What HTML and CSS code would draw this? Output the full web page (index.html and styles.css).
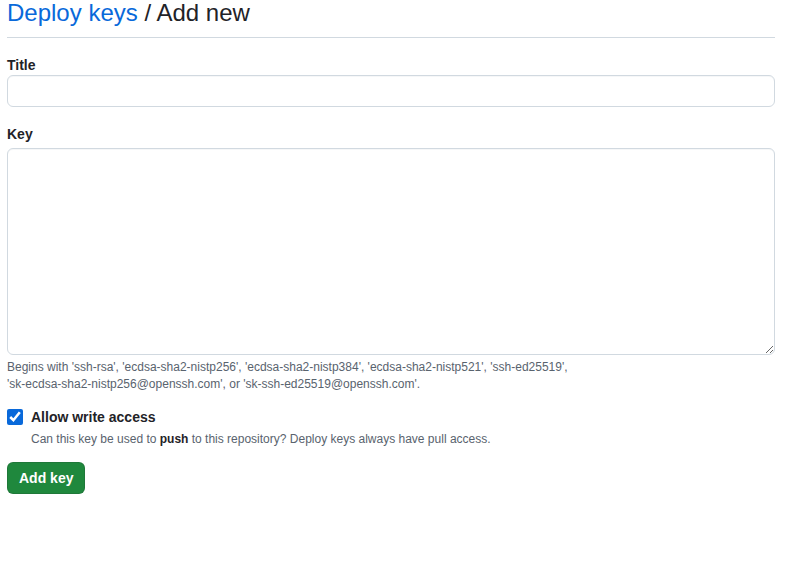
FILE: index.html
```html
<!DOCTYPE html>
<html lang="en">
<head>
    <meta charset="UTF-8">
    <title>Deploy keys / Add new</title>
    <link rel="stylesheet" href="styles.css">
</head>
<body>
    <div class="page">
        <div class="subhead">
            <h2 class="subhead-heading"><a href="#">Deploy keys</a> / Add new</h2>
        </div>

        <form class="key-form">
            <div class="form-group">
                <label class="form-label" for="title">Title</label>
                <input class="form-control" type="text" id="title">
            </div>

            <div class="form-group key-group">
                <label class="form-label" for="key">Key</label>
                <textarea class="form-control key-area" id="key"></textarea>
                <p class="note">Begins with 'ssh-rsa', 'ecdsa-sha2-nistp256', 'ecdsa-sha2-nistp384', 'ecdsa-sha2-nistp521', 'ssh-ed25519',<br>'sk-ecdsa-sha2-nistp256@openssh.com', or 'sk-ssh-ed25519@openssh.com'.</p>
            </div>

            <div class="form-checkbox">
                <input type="checkbox" id="write" checked>
                <div>
                    <label class="check-label" for="write">Allow write access</label>
                    <p class="note check-note">Can this key be used to <strong>push</strong> to this repository? Deploy keys always have pull access.</p>
                </div>
            </div>

            <button type="button" class="btn-primary">Add key</button>
        </form>
    </div>
</body>
</html>
```

FILE: styles.css
```css
body {
    margin: 0;
    font-family: "Liberation Sans", Arial, sans-serif;
    font-size: 14px;
    color: #1f2328;
    background: #fff;
}

.page {
    width: 768px;
    margin-left: 7px;
}

.subhead {
    padding-bottom: 11px;
    border-bottom: 1px solid #d1d9e0;
}

.subhead-heading {
    margin: 0;
    font-size: 24px;
    font-weight: 400;
    line-height: 26px;
}

.subhead-heading a {
    color: #0969da;
    text-decoration: none;
}

.key-form {
    padding-top: 17px;
}

.form-group {
    margin-bottom: 17px;
}

.form-label {
    display: block;
    font-weight: 600;
    line-height: 20px;
}

.key-group {
    margin-bottom: 15px;
}

.key-group .form-label {
    margin-bottom: 4px;
}

.form-control {
    display: block;
    box-sizing: border-box;
    width: 100%;
    height: 32px;
    padding: 5px 12px;
    border: 1px solid #d1d9e0;
    border-radius: 6px;
    font: inherit;
    background: #fff;
    box-shadow: inset 0 1px 0 rgba(208, 215, 222, 0.2);
}

.key-area {
    height: 207px;
    resize: vertical;
}

.note {
    margin: 4px 0 0;
    font-size: 12px;
    line-height: 17px;
    color: #59636e;
}

.form-checkbox {
    display: flex;
    gap: 8px;
}

.form-checkbox input {
    width: 16px;
    height: 16px;
    margin: 1px 0 0;
    accent-color: #0969da;
}

.check-label {
    font-weight: 600;
    line-height: 18px;
}

.check-note {
    margin-top: 5px;
}

.check-note strong {
    color: #1f2328;
}

.btn-primary {
    margin-top: 14px;
    height: 32px;
    padding: 0 11px;
    border: 1px solid rgba(31, 35, 40, 0.15);
    border-radius: 6px;
    background: #1f883d;
    color: #fff;
    font: inherit;
    font-weight: 600;
    cursor: pointer;
}
```
